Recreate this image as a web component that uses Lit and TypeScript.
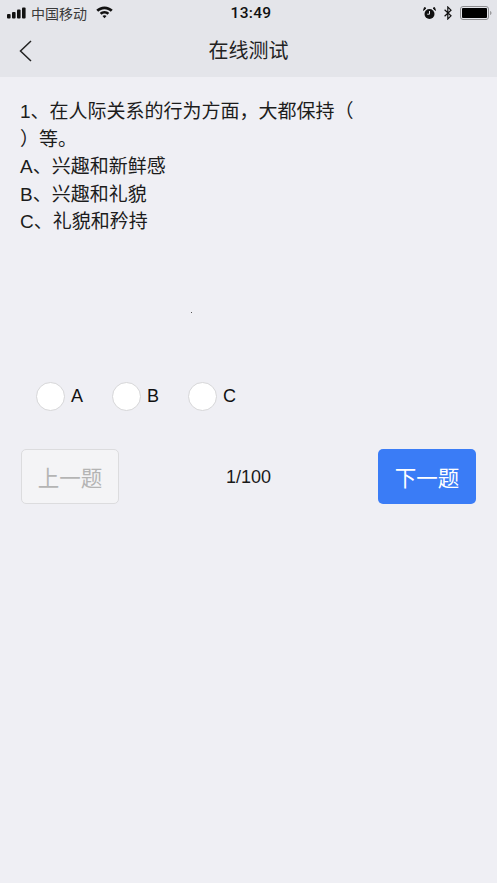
import { LitElement, html, css, svg } from "lit";
import { customElement } from "lit/decorators.js";

@customElement("app-root")
export class AppRoot extends LitElement {
  static styles = css`
    :host {
      display: block;
      width: 497px;
      height: 883px;
      background: #efeff4;
      font-family: "Liberation Sans", "Noto Sans CJK SC", sans-serif;
      color: #111;
      overflow: hidden;
    }
    .head {
      background: #e4e5ea;
      height: 77px;
      display: flex;
      flex-direction: column;
      box-sizing: border-box;
    }
    .status {
      height: 26px;
      padding: 0 5px 0 7px;
      display: grid;
      grid-template-columns: 1fr auto 1fr;
      align-items: center;
    }
    .left { display: flex; align-items: center; gap: 4px; color: #333; }
    .left .carrier { font-size: 14px; margin-right: 5px; color: #3a3a3a; }
    .wifi { margin-bottom: 1px; }
    .time { font-family: Roboto, sans-serif; font-size: 15.5px; font-weight: 500; letter-spacing: 0.3px; color: #111; margin-left: 3px; }
    .right { display: flex; align-items: center; justify-content: flex-end; gap: 8px; }
    .nav {
      flex: 1;
      display: grid;
      grid-template-columns: 1fr auto 1fr;
      align-items: center;
      padding-bottom: 1px;
    }
    .back { display: block; margin-left: 19px; }
    .title { font-size: 20px; line-height: 28px; color: #222; }
    .question {
      margin: 0;
      padding: 21px 0 0 20px;
      font-size: 19px;
      line-height: 27.5px;
      color: #1c1c1c;
    }
    .options {
      display: flex;
      padding-left: 36px;
      margin-top: 146px;
    }
    .opt { display: flex; align-items: center; gap: 6px; font-size: 18px; color: #111; width: 76px; }
    .radio {
      width: 29px;
      height: 29px;
      box-sizing: border-box;
      border-radius: 50%;
      background: #fff;
      border: 1px solid #d6d6d8;
      flex: none;
    }
    .pager {
      display: flex;
      align-items: center;
      justify-content: space-between;
      margin: 38px 21px 0 21px;
    }
    .btn {
      width: 98px;
      height: 55px;
      box-sizing: border-box;
      border-radius: 5px;
      display: flex;
      align-items: center;
      justify-content: center;
      font-size: 21.5px;
    }
    .prev { background: #f4f4f6; border: 1px solid #dcdcde; color: #b4b4b4; }
    .next { background: #3a7cf6; color: #fff; }
    .count { font-size: 18px; color: #1a1a1a; padding-top: 2px; }
    .speck { width: 1px; height: 1px; background: #555; position: absolute; left: 191px; top: 312px; }
  `;

  private signal() {
    return svg`<svg width="20" height="12" viewBox="0 0 20 12">
      <rect x="0" y="7" width="3.6" height="4.5" rx="1" fill="#111"/>
      <rect x="5" y="5" width="3.6" height="6.5" rx="1" fill="#111"/>
      <rect x="10" y="2.5" width="3.6" height="9" rx="1" fill="#111"/>
      <rect x="15" y="0.5" width="3.6" height="11" rx="1" fill="#111"/>
    </svg>`;
  }

  private wifi() {
    return svg`<svg class="wifi" width="17" height="13" viewBox="0 0 17 13">
      <path d="M8.5 0.5C5.2 0.5 2.4 1.8 0.3 3.7L2.2 5.7C3.9 4.2 6.1 3.2 8.5 3.2C10.9 3.2 13.1 4.2 14.8 5.7L16.7 3.7C14.6 1.8 11.8 0.5 8.5 0.5Z" fill="#111"/>
      <path d="M8.5 5C6.7 5 5.1 5.7 3.8 6.9L5.6 8.7C6.4 8 7.4 7.6 8.5 7.6C9.6 7.6 10.6 8 11.4 8.7L13.2 6.9C11.9 5.7 10.3 5 8.5 5Z" fill="#111"/>
      <path d="M8.5 9.2C7.7 9.2 7 9.5 6.5 10L8.5 12.3L10.5 10C10 9.5 9.3 9.2 8.5 9.2Z" fill="#111"/>
    </svg>`;
  }

  private alarm() {
    return svg`<svg width="13" height="13" viewBox="0 0 13 13">
      <circle cx="6.5" cy="7" r="5" fill="#111"/>
      <path d="M0.6 3.4L3 1.2L1.4 0.6Z M12.4 3.4L10 1.2L11.6 0.6Z" fill="#111" stroke="#111"/>
      <path d="M6.5 4V7.2H4.2" stroke="#e4e5ea" stroke-width="1" fill="none"/>
    </svg>`;
  }

  private bluetooth() {
    return svg`<svg width="8" height="14" viewBox="0 0 8 14">
      <path d="M0.6 3.8L7 9.8L3.8 13V1L7 4.2L0.6 10.2" stroke="#111" stroke-width="1.2" fill="none"/>
    </svg>`;
  }

  private battery() {
    return svg`<svg width="32" height="14" viewBox="0 0 32 14">
      <rect x="0.5" y="0.5" width="28" height="13" rx="2.5" fill="none" stroke="#8d8d90"/>
      <rect x="2" y="2" width="25" height="10" rx="1" fill="#000"/>
      <path d="M30 5C31 5.2 31.5 6 31.5 7C31.5 8 31 8.8 30 9Z" fill="#9a9a9c"/>
    </svg>`;
  }

  render() {
    return html`
      <div class="head">
        <div class="status">
          <div class="left">
            ${this.signal()}
            <span class="carrier">中国移动</span>
            ${this.wifi()}
          </div>
          <div class="time">13:49</div>
          <div class="right">${this.alarm()}${this.bluetooth()}${this.battery()}</div>
        </div>
        <div class="nav">
          <svg class="back" width="13" height="22" viewBox="0 0 13 22">
            <path d="M12 1L1.5 11L12 21" fill="none" stroke="#222" stroke-width="1.5"/>
          </svg>
          <div class="title">在线测试</div>
          <div></div>
        </div>
      </div>
      <p class="question">
        1、在人际关系的行为方面，大都保持（<br />）等。<br />
        A、兴趣和新鲜感<br />
        B、兴趣和礼貌<br />
        C、礼貌和矜持
      </p>
      <div class="options">
        ${["A", "B", "C"].map(
          (o) => html`<div class="opt"><span class="radio"></span><span>${o}</span></div>`
        )}
      </div>
      <div class="pager">
        <div class="btn prev">上一题</div>
        <div class="count">1/100</div>
        <div class="btn next">下一题</div>
      </div>
      <div class="speck"></div>
    `;
  }
}
